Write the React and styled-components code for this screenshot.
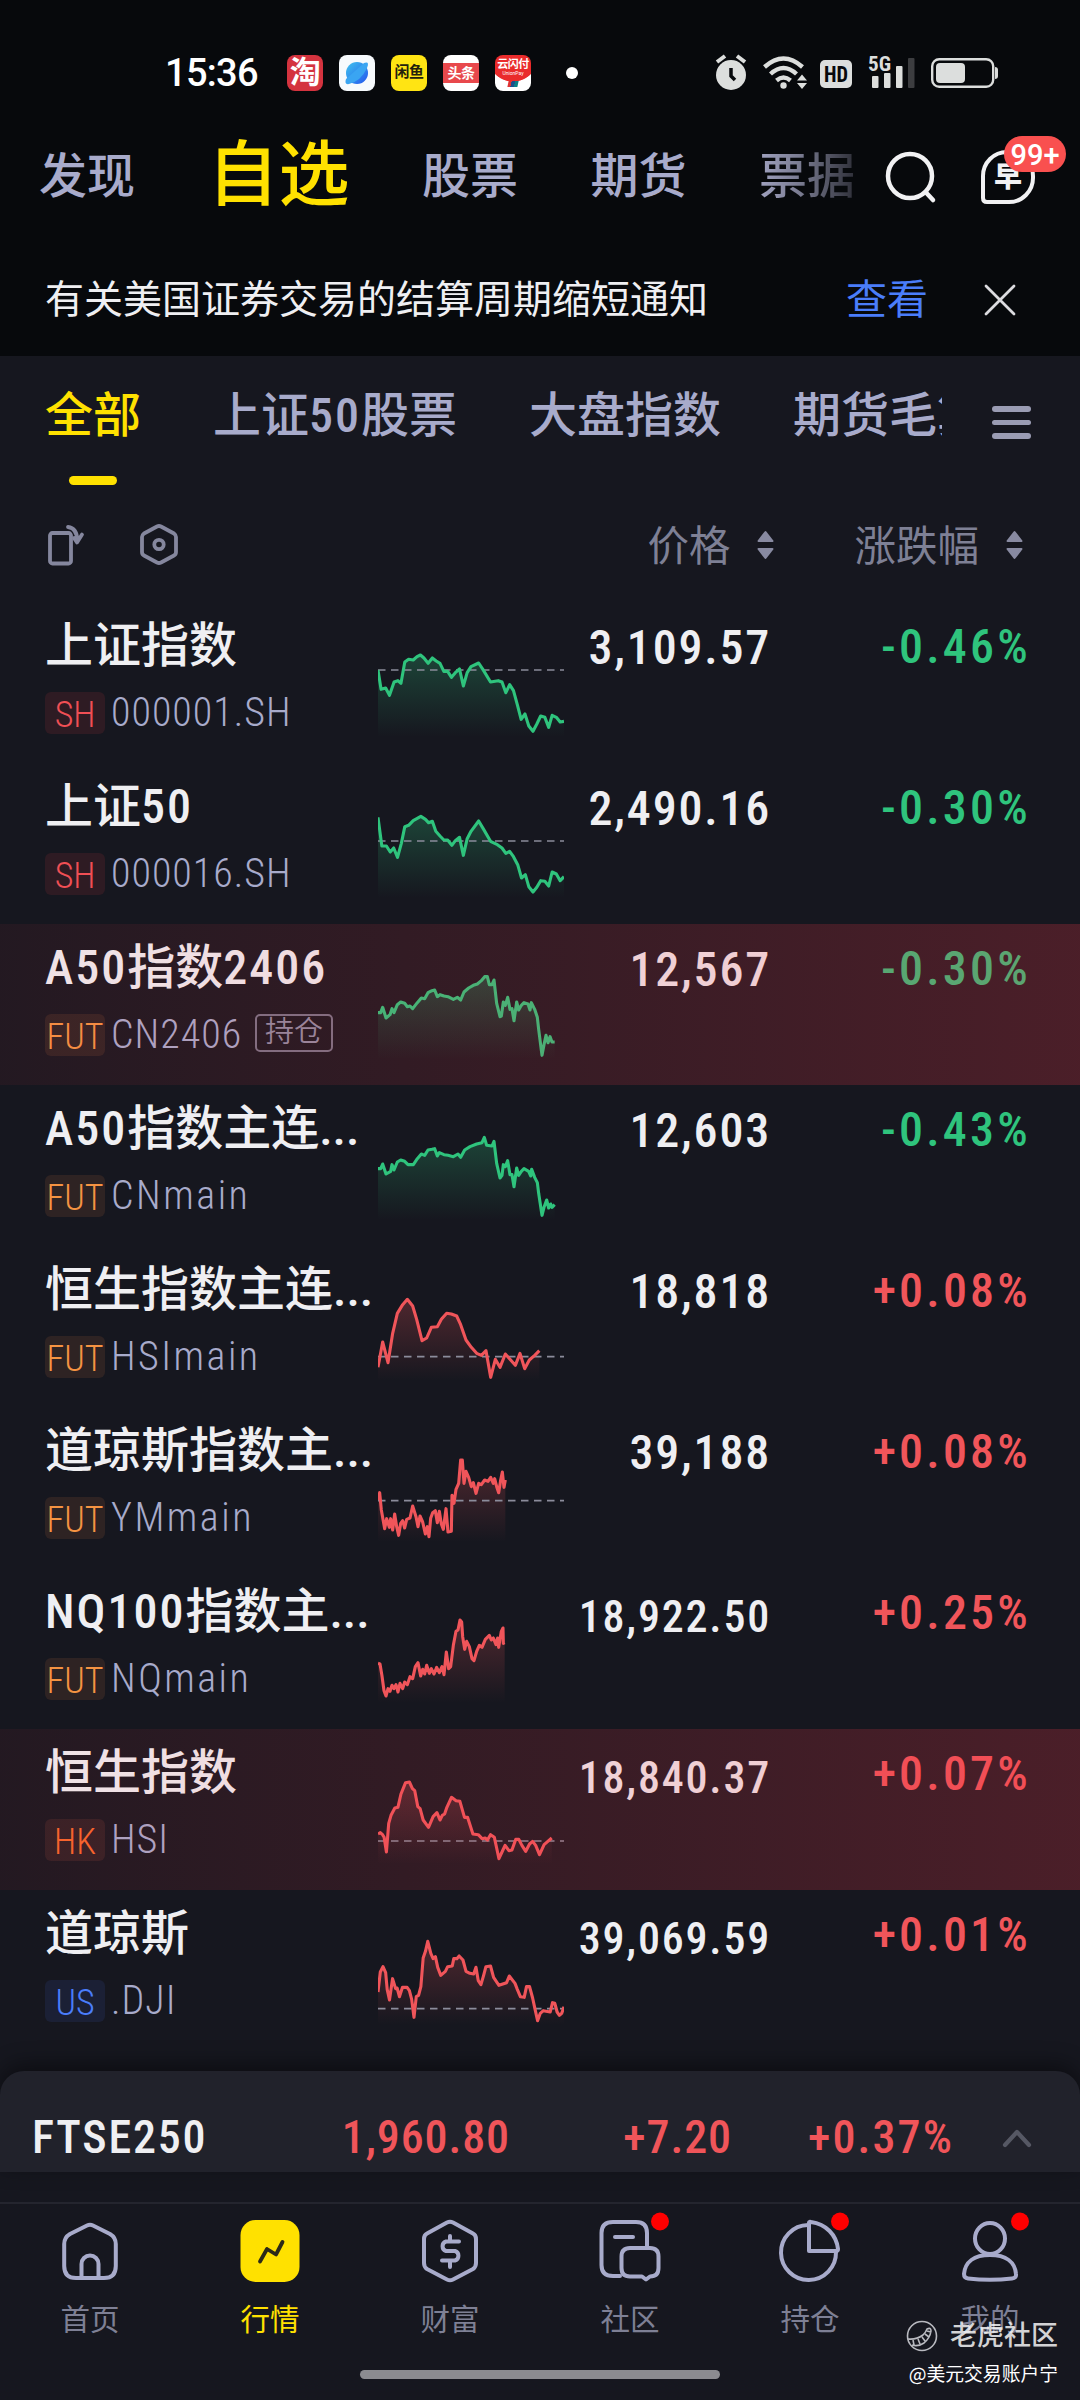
import React from "react";
import styled, { createGlobalStyle, css } from "styled-components";

const colors = {
  top: "#07090c",
  page: "#16171f",
  panel: "#21222b",
  white: "#efeff2",
  tab: "#a8abcb",
  muted: "#7e8095",
  yellow: "#ffe100",
  blue: "#4a7dfa",
  green: "#2fc47d",
  red: "#f0555a",
};

const narrow = `"Roboto Condensed", Roboto, "Noto Sans CJK SC", sans-serif`;

const GlobalStyle = createGlobalStyle`
  * {
    box-sizing: border-box;
  }
  body {
    margin: 0;
    background: ${colors.page};
    font-family: Roboto, "Noto Sans CJK SC", sans-serif;
  }
  svg {
    display: block;
    flex: none;
  }
`;

const Screen = styled.main`
  width: 1080px;
  height: 2400px;
  display: flex;
  flex-direction: column;
  overflow: hidden;
  background: ${colors.page};
  white-space: nowrap;
`;

/* status bar */

const StatusBar = styled.header`
  height: 128px;
  padding: 17px 82px 0 165px;
  display: flex;
  align-items: center;
  background: ${colors.top};
`;

const Clock = styled.time`
  width: 122px;
  font-size: 38px;
  font-weight: 500;
  line-height: 40px;
  letter-spacing: -0.7px;
  color: #fff;
`;

const AppIcons = styled.div`
  display: flex;
  gap: 16px;
`;

const AppIcon = styled.span`
  width: 36px;
  height: 36px;
  border-radius: 8px;
  display: flex;
  flex-direction: column;
  align-items: center;
  justify-content: center;
  overflow: hidden;
  background: ${({ $bg }) => $bg};
  color: ${({ $color }) => $color || "#fff"};
  font-size: ${({ $size }) => $size || 14}px;
  font-weight: 700;
  line-height: 1;
  letter-spacing: -0.5px;

  small {
    font-size: 5px;
    line-height: 6px;
    font-weight: 400;
    letter-spacing: 0;
  }
  i {
    width: 10px;
    height: 6px;
    margin-top: 5px;
    transform: skewX(-12deg);
    background: linear-gradient(90deg, #d33 30%, #1d4f8c 30% 65%, #0b7f86 65%);
  }
`;

const Dot = styled.span`
  width: 12px;
  height: 12px;
  margin: 0 auto 0 35px;
  border-radius: 50%;
  background: #fff;
`;

/* main tabs */

const TopNav = styled.nav`
  height: 98px;
  padding-left: 39px;
  display: flex;
  align-items: center;
  background: ${colors.top};
`;

const TopTabs = styled.div`
  width: 818px;
  height: 98px;
  display: flex;
  align-items: center;
  gap: 72.5px;
  overflow: hidden;
`;

const TopTab = styled.a`
  font-size: ${({ $active }) => ($active ? 71 : 48)}px;
  line-height: 90px;
  font-weight: 500;
  color: ${({ $active }) => ($active ? colors.yellow : colors.tab)};
  ${({ $active }) =>
    $active &&
    css`
      padding-bottom: 5px;
    `}
  ${({ $faded }) =>
    $faded &&
    css`
      color: transparent;
      background: linear-gradient(90deg, #a0a2c0 0%, #77798e 45%, #2e2f38 100%);
      background-clip: text;
    `}
`;

const Inbox = styled.div`
  position: relative;
  margin-left: 43px;
`;

const SearchIcon = styled.svg`
  margin-left: 27px;
`;

const Badge = styled.span`
  position: absolute;
  left: 23px;
  top: -14px;
  width: 62px;
  height: 36px;
  border-radius: 18px;
  background: #f9504f;
  color: #fff;
  font-size: 29px;
  font-weight: 500;
  line-height: 38px;
  text-align: center;
`;

/* notice */

const Notice = styled.section`
  height: 130px;
  padding: 18px 64px 0 45px;
  display: flex;
  align-items: center;
  background: ${colors.top};
  color: ${colors.white};
  font-size: 39px;
  line-height: 50px;

  a {
    margin: 0 56px 0 auto;
    font-size: 41px;
    color: ${colors.blue};
  }
`;

/* group tabs */

const GroupNav = styled.nav`
  height: 134px;
  padding: 0 49px 0 45px;
  display: flex;
  justify-content: space-between;
`;

const GroupTabs = styled.div`
  width: 897px;
  display: flex;
  gap: 72px;
  overflow: hidden;
`;

const GroupTab = styled.a`
  flex: none;
  display: flex;
  flex-direction: column;
  align-items: center;
  padding-top: 25px;
  font-size: 48px;
  line-height: 70px;
  font-weight: 500;
  color: ${({ $active }) => ($active ? colors.yellow : colors.tab)};

  &::after {
    content: "";
    width: 48px;
    height: 9px;
    margin-top: 25px;
    border-radius: 5px;
    background: ${({ $active }) => ($active ? colors.yellow : "transparent")};
  }
`;

const Latin = styled.span`
  font-family: ${narrow};
  letter-spacing: ${({ $tight }) => ($tight ? 0 : 2)}px;
`;

const MenuLines = styled.div`
  width: 39px;
  padding-top: 50px;
  display: flex;
  flex-direction: column;
  gap: 8px;

  span {
    height: 5.5px;
    border-radius: 3px;
    background: #9a9cb3;
  }
`;

/* list header */

const ListHead = styled.div`
  height: 112px;
  padding: 0 57px 2px 46px;
  display: flex;
  align-items: center;
  color: ${colors.muted};
`;

const Sort = styled.span`
  display: flex;
  align-items: center;
  gap: 27px;
  margin-left: ${({ $left }) => $left};
  font-size: 41.5px;
  line-height: 50px;

  span {
    padding-top: 3px;
  }
`;

/* rows */

const List = styled.ul`
  height: 1469px;
  margin: 0;
  padding: 0;
  list-style: none;
`;

const Row = styled.li`
  position: relative;
  height: 161px;
  padding: 0 49px 0 45px;
  display: grid;
  grid-template-columns: 333px 186px 207px 1fr;

  ${({ $flash }) =>
    $flash &&
    css`
      &::after {
        content: "";
        position: absolute;
        inset: 0;
        background: linear-gradient(
          90deg,
          rgba(246, 55, 71, 0.06),
          rgba(246, 55, 71, 0.235)
        );
      }
    `}
`;

const Name = styled.div`
  padding-top: 9px;

  h2 {
    margin: 0;
    font-size: 48px;
    line-height: 70px;
    font-weight: 500;
    color: ${colors.white};
  }
`;

const Meta = styled.p`
  margin: 10px 0 0;
  display: flex;
  align-items: center;
  font-family: ${narrow};
  font-size: 40px;
  font-weight: 350;
  line-height: 42px;
  color: ${colors.tab};
`;

const marketColors = {
  SH: ["#f04f55", "#2e1b23"],
  FUT: ["#f59342", "#2e2323"],
  HK: ["#f7672b", "#2e2024"],
  US: ["#4a7dfa", "#1b2035"],
};

const Market = styled.b`
  width: 60px;
  height: 42px;
  margin-right: 6px;
  border-radius: 6px;
  font-size: 36px;
  font-weight: 350;
  line-height: 46px;
  text-align: center;
  color: ${({ $market }) => marketColors[$market][0]};
  background: ${({ $market }) => marketColors[$market][1]};
`;

const Code = styled.span`
  padding-top: 1px;
  letter-spacing: ${({ $loose }) => ($loose ? 2.5 : 1)}px;
`;

const Held = styled.em`
  margin: -4px 0 0 13px;
  height: 38px;
  padding: 0 8px;
  border: 2px solid #767386;
  border-radius: 5px;
  font-size: 29px;
  font-style: normal;
  line-height: 33px;
  color: #8f8da3;
`;

const Price = styled.span`
  padding-top: 11px;
  text-align: right;
  font-family: ${narrow};
  font-size: ${({ $small }) => ($small ? 44 : 48)}px;
  line-height: ${({ $small }) => ($small ? 77 : 70)}px;
  font-weight: 500;
  letter-spacing: 1.8px;
  color: ${colors.white};
`;

const Change = styled(Price)`
  padding-top: 10px;
  letter-spacing: 3.2px;
  color: ${({ $up }) => ($up ? colors.red : colors.green)};
`;

/* index drawer */

const Drawer = styled.section`
  height: 101px;
  padding: 33px 48px 0 32px;
  display: grid;
  grid-template-columns: 220px 258px 222px 222px 1fr;
  border-radius: 24px 24px 0 0;
  background: ${colors.panel};
  box-shadow: 0 -6px 22px rgba(0, 0, 0, 0.45);
  font-family: ${narrow};
  font-size: 46px;
  line-height: 66px;
  font-weight: 500;
  letter-spacing: 0.9px;
  color: ${colors.red};
  text-align: right;

  strong {
    color: ${colors.white};
    font-weight: 500;
    text-align: left;
    letter-spacing: 1.8px;
  }
  em {
    font-style: normal;
    letter-spacing: 2.1px;
  }
  svg {
    margin: 23px 0 0 auto;
  }
`;

/* bottom nav */

const BottomNav = styled.nav`
  position: relative;
  height: 198px;
  margin-top: 30px;
  border-top: 2px solid #24252e;
  display: grid;
  grid-template-columns: repeat(6, 180px);
`;

const NavItem = styled.a`
  display: flex;
  flex-direction: column;
  align-items: center;
  padding-top: 8px;
  font-size: 29.5px;
  line-height: 40px;
  color: ${({ $active }) => ($active ? colors.yellow : colors.muted)};

  svg {
    margin-bottom: 14px;
  }
`;

const HomeBar = styled.span`
  position: absolute;
  left: 360px;
  top: 166px;
  width: 360px;
  height: 9px;
  border-radius: 5px;
  background: #8b8b90;
`;

const Watermark = styled.div`
  position: absolute;
  right: 22px;
  top: 113px;
  display: flex;
  flex-direction: column;
  align-items: flex-end;
  color: rgba(255, 255, 255, 0.82);
  font-size: 27px;
  font-weight: 500;
  line-height: 38px;

  div {
    display: flex;
    align-items: center;
    gap: 12px;
  }
  span {
    color: #fff;
    font-family: "Noto Sans CJK SC", sans-serif;
    font-size: 18.8px;
    font-weight: 400;
    line-height: 35px;
  }
`;

/* Every series is stored in the units of its own view box, origin at x, y. */
const rows = [
  {
    name: "上证指数", market: "SH", code: "000001.SH", price: "3,109.57", change: "-0.46%",
    box: [988, 36, 486], base: 240,
    points: "988,240 996,298 1008,294 1018,316 1030,276 1040,272 1048,280 1058,216 1068,208 1080,210 1090,200 1099,195 1108,204 1119,220 1130,204 1140,213 1150,220 1160,244 1170,244 1180,262 1190,248 1201,237 1211,288 1221,248 1231,230 1251,219 1262,238 1282,276 1302,272 1312,276 1322,308 1332,284 1342,302 1352,344 1362,388 1372,372 1382,408 1393,424 1403,402 1413,378 1424,382 1434,412 1443,376 1454,382 1464,396 1474,394",
  },
  {
    name: "上证50", market: "SH", code: "000016.SH", price: "2,490.16", change: "-0.30%",
    box: [988, 519, 486], base: 753,
    points: "988,682 998,768 1010,768 1020,786 1029,774 1039,802 1049,760 1058,710 1068,706 1080,692 1100,679 1112,688 1120,698 1130,694 1139,724 1150,738 1160,750 1170,750 1181,766 1190,752 1201,742 1211,796 1221,746 1231,724 1251,693 1264,718 1282,754 1300,764 1312,774 1322,790 1332,784 1342,800 1353,824 1363,864 1373,854 1382,890 1393,906 1403,892 1413,872 1424,874 1434,888 1443,846 1454,852 1464,872 1474,860",
  },
  {
    name: "A50指数2406", market: "FUT", code: "CN2406", price: "12,567", change: "-0.30%", held: true, flash: true,
    box: [54, 42, 558],
    points: "54,308 62,308 68,292 78,324 90,314 96,296 102,308 112,284 122,276 134,280 142,290 150,288 158,296 172,278 184,264 194,266 204,248 216,242 224,240 232,260 240,254 252,258 264,260 280,268 292,262 302,270 312,246 326,234 340,226 352,222 364,212 374,200 382,200 388,224 396,224 402,210 410,280 420,320 424,318 430,276 436,286 443,262 450,298 456,296 462,332 470,276 476,300 484,286 492,278 504,282 510,300 514,278 524,298 532,322 536,358 546,436 552,404 558,376 564,398 570,380 576,396 584,396",
  },
  {
    name: "A50指数主连...", market: "FUT", code: "CNmain", price: "12,603", change: "-0.43%",
    box: [54, 525, 558],
    points: "54,776 62,776 68,762 78,792 92,784 96,764 102,780 112,756 122,750 134,754 144,764 160,764 172,746 184,732 194,736 204,720 216,718 224,716 232,738 238,728 252,734 264,736 280,740 294,732 302,742 314,720 330,710 350,702 366,698 373,682 380,706 396,708 402,694 410,760 420,804 426,796 430,764 436,770 443,752 450,794 456,794 462,830 470,774 476,796 484,784 492,776 506,784 512,798 515,778 524,802 532,818 536,850 546,916 552,892 560,870 566,894 572,882 576,892 584,884",
  },
  {
    name: "恒生指数主连...", market: "FUT", code: "HSImain", price: "18,818", change: "+0.08%",
    box: [54, -72, 558], base: 260,
    points: "54,292 68,216 84,278 98,190 112,130 128,104 142,88 158,108 170,148 186,212 200,204 214,172 232,170 244,148 260,130 274,132 290,138 302,164 318,210 334,232 350,250 364,256 378,242 392,322 406,268 420,292 436,252 450,268 466,286 480,250 494,296 508,270 524,256 538,242",
  },
  {
    name: "道琼斯指数主...", market: "FUT", code: "YMmain", price: "39,188", change: "+0.08%",
    box: [54, 411, 558], base: 692,
    points: "54,690 59,668 64,720 74,776 80,746 88,772 92,746 98,780 104,732 110,770 116,796 122,760 128,752 134,774 140,748 150,744 158,708 168,740 174,770 180,738 188,756 196,792 202,770 207,800 212,745 218,728 226,722 232,758 238,724 244,762 250,778 258,716 264,786 274,784 276,676 282,700 288,658 296,640 302,570 307,570 312,640 318,604 326,622 334,650 340,638 348,670 356,640 364,644 374,630 384,634 392,622 400,640 404,626 410,650 416,668 422,630 427,606 432,652 436,630",
  },
  {
    name: "NQ100指数主...", market: "FUT", code: "NQmain", price: "18,922.50", change: "+0.25%",
    box: [54, 894, 558],
    points: "54,1180 60,1182 66,1218 72,1262 78,1278 84,1256 90,1264 96,1246 102,1256 108,1244 114,1266 120,1240 128,1256 134,1236 142,1244 150,1220 158,1226 166,1190 174,1178 182,1218 188,1198 194,1212 200,1186 208,1210 214,1196 222,1212 230,1192 238,1208 246,1190 252,1214 259,1146 266,1196 272,1190 280,1126 288,1084 294,1080 300,1050 305,1056 308,1100 314,1138 320,1114 328,1130 336,1166 342,1172 350,1144 358,1126 366,1132 376,1108 388,1096 394,1110 400,1104 408,1124 413,1104 416,1132 424,1084 429,1074 430,1120 434,1118",
  },
  {
    name: "恒生指数", market: "HK", code: "HSI", price: "18,840.37", change: "+0.07%", flash: true,
    box: [988, 27, 486], base: 363,
    points: "988,342 994,338 1000,344 1004,352 1010,396 1016,310 1022,286 1032,264 1040,262 1048,222 1060,188 1070,186 1078,206 1084,212 1092,260 1098,266 1106,300 1120,322 1132,290 1142,278 1150,300 1156,286 1162,282 1168,262 1180,232 1192,242 1202,244 1214,292 1222,292 1236,342 1250,344 1260,356 1268,354 1274,360 1282,344 1292,352 1298,384 1304,416 1312,396 1320,376 1330,392 1338,390 1348,358 1356,358 1364,376 1374,394 1384,372 1392,364 1400,376 1410,404 1422,374 1434,362 1442,354",
  },
  {
    name: "道琼斯", market: "US", code: ".DJI", price: "39,069.59", change: "+0.01%",
    box: [988, 510, 486], base: 866,
    points: "988,816 994,756 1001,740 1008,758 1012,808 1018,840 1026,776 1034,806 1038,804 1044,830 1052,802 1064,802 1070,812 1076,838 1082,892 1088,830 1094,826 1100,800 1106,714 1112,694 1118,664 1126,700 1132,716 1138,710 1144,742 1152,766 1164,754 1170,740 1182,738 1186,716 1194,716 1200,708 1210,720 1218,754 1228,760 1238,762 1244,742 1250,782 1257,794 1264,766 1270,740 1282,738 1290,772 1304,796 1324,788 1331,768 1346,790 1352,808 1360,830 1370,832 1376,800 1384,800 1392,834 1398,866 1405,902 1412,880 1420,872 1438,876 1444,848 1450,850 1456,876 1462,886 1468,880 1474,860",
  },
];

// latin runs inside chinese names use the narrow face
const mixed = (text) =>
  text
    .split(/([\x20-\x7e]+)/)
    .filter(Boolean)
    .map((part, i) =>
      /^[\x20-\x7e]/.test(part) ? (
        <Latin key={i} $tight={part === "..."}>{part}</Latin>
      ) : (
        part
      )
    );

function Sparkline({ id, box, base, points, up }) {
  const [x, y, w] = box;
  const color = up ? colors.red : colors.green;
  const list = points.split(" ");
  const lastX = list[list.length - 1].split(",")[0];
  const floor = y + 405;
  return (
    <svg width="186" height="161" viewBox={`${x} ${y} ${w} 483`} preserveAspectRatio="none">
      <defs>
        <linearGradient id={id} x1="0" y1="0" x2="0" y2="1">
          <stop offset="0" stopColor={color} stopOpacity="0.26" />
          <stop offset="1" stopColor={color} stopOpacity="0" />
        </linearGradient>
      </defs>
      <polygon points={`${x},${floor} ${points} ${lastX},${floor}`} fill={`url(#${id})`} />
      {base && (
        <line
          x1={x} x2={x + w} y1={base} y2={base}
          stroke="#8b8c9b" strokeWidth="1.6" strokeDasharray="7.5 5.5" vectorEffect="non-scaling-stroke"
        />
      )}
      <polyline
        points={points} fill="none" stroke={color} strokeWidth="3.1"
        strokeLinejoin="round" vectorEffect="non-scaling-stroke"
      />
    </svg>
  );
}

function StatusIcons() {
  return (
    <svg width="284" height="40" viewBox="714 52 284 40" fill="#dcdedd">
      <circle cx="731" cy="74" r="15" />
      <path d="M717 61l8-6M745 61l-8-6" stroke="#dcdedd" strokeWidth="4" />
      <path d="M731 67v8l4 4" stroke="#07090c" strokeWidth="3.5" fill="none" />
      <g fill="none" stroke="#dcdedd" strokeWidth="4.4">
        <path d="M764.500 66q19-17 38 0" />
        <path d="M770.500 73q13-12 26 0" />
        <path d="M776.500 79.500q7-6 14 0" />
      </g>
      <circle cx="783.500" cy="84.500" r="3.200" />
      <path d="M797 79.500l5-6 5 6zM797 82l5 6 5-6z" />
      <rect x="820" y="59" width="32" height="28" rx="5" />
      <text x="836" y="81" fontSize="22" fontWeight="700" textAnchor="middle" fill="#07090c" fontFamily="Roboto Condensed, Roboto" textLength="24" lengthAdjust="spacingAndGlyphs">HD</text>
      <text x="868" y="70" fontSize="20" fontWeight="700" fontFamily="Roboto Condensed, Roboto" textLength="23" lengthAdjust="spacingAndGlyphs">5G</text>
      <rect x="872" y="75" width="6.500" height="12" rx="1" />
      <rect x="884" y="72" width="6.500" height="15" rx="1" />
      <rect x="896" y="65" width="6.500" height="22" rx="1" />
      <rect x="908" y="57" width="6.500" height="30" rx="1" fill="#3c3d40" />
      <rect x="932.200" y="58.200" width="61" height="27.600" rx="7" fill="none" stroke="#dcdedd" strokeWidth="2.400" />
      <rect x="936" y="62" width="29" height="20" rx="4" />
      <path d="M995 66q3 0 3 3v6q0 3-3 3z" />
    </svg>
  );
}

const SortArrows = () => (
  <svg width="17" height="30" viewBox="0 0 17 30" fill="#888aa1" stroke="#888aa1" strokeWidth="2" strokeLinejoin="round">
    <path d="M8.500 2L15.500 11H1.500zM8.500 28L1.500 19H15.500z" />
  </svg>
);

/* 68x74 boxes, the item centre is x = 34 */
const icons = {
  home: (
    <>
      <path d="M31 13.500Q34 12 37 13.500L54 22Q59.800 25.500 59.800 32V54Q59.800 66 48 66H20Q8.200 66 8.200 54V32Q8.200 25.500 14 22Z" />
      <path d="M25.500 66V52a8.500 8.500 0 0 1 17 0V66" />
    </>
  ),
  wealth: (
    <>
      <path d="M31 10.500Q34 9 37 10.500L57 21.500Q60 23 60 27V51Q60 55 57 57L37 67.500Q34 69 31 67.500L11 57Q8 55 8 51V27Q8 23 11 21.500Z" />
      <path d="M43 29.500H30a5 5 0 0 0 0 9.500h9a5 5 0 0 1 0 9.500H26M34 24v5M34 49v6" />
    </>
  ),
  community: (
    <>
      <path d="M24 64H17Q5.500 64 5.500 53V21Q5.500 10 17 10H40Q51 10 51 21V36" />
      <path d="M19 25H37" />
      <path d="M34 36H54Q62.500 36 62.500 44.500V56Q62.500 64.500 54 64.500L50 67.500L46 64.500H34Q25.500 64.500 25.500 56V44.500Q25.500 36 34 36Z" />
    </>
  ),
  position: (
    <>
      <path d="M32 13A27.500 27.500 0 1 0 60 40" />
      <path d="M33 10.500Q33 9.500 35 10C50 12 60.500 23 62 37Q62 39 60 39H33Z" />
    </>
  ),
  mine: (
    <>
      <ellipse cx="34" cy="26.500" rx="15" ry="15.500" />
      <path d="M34 43C18 43 9 50 8 62Q8 66 12 66.500Q34 69 56 66.500Q60.500 66 60 62C59 50 50 43 34 43Z" />
    </>
  ),
};

function NavIcon({ name, dot }) {
  return (
    <svg width="84" height="74" viewBox="-8 0 84 74" fill="none" stroke="#a8abcb" strokeWidth="4" strokeLinejoin="round" strokeLinecap="round">
      {name === "market" ? (
        <>
          <rect x="4.500" y="8" width="59" height="62" rx="15" fill={colors.yellow} stroke="none" />
          <path d="M24 49.500L31 37L40 42.500L46.500 30" stroke="#2c2a18" strokeWidth="3.800" />
        </>
      ) : (
        icons[name]
      )}
      {dot && <circle cx="64" cy="9.500" r="9" fill="#ff0000" stroke="none" />}
    </svg>
  );
}

const navItems = [
  { label: "首页", icon: "home" },
  { label: "行情", icon: "market", active: true },
  { label: "财富", icon: "wealth" },
  { label: "社区", icon: "community", dot: true },
  { label: "持仓", icon: "position", dot: true },
  { label: "我的", icon: "mine", dot: true },
];

export default function App() {
  return (
    <>
      <GlobalStyle />
      <Screen>
        <StatusBar>
          <Clock>15:36</Clock>
          <AppIcons>
            <AppIcon $bg="#d4333f" $size={31}>淘</AppIcon>
            <AppIcon $bg="#f6fafd">
              <svg width="28" height="28" viewBox="0 0 28 28">
                <defs>
                  <linearGradient id="planet" x1="0" y1="0" x2="1" y2="1">
                    <stop offset="0" stopColor="#3fc3ee" />
                    <stop offset="1" stopColor="#2356ee" />
                  </linearGradient>
                </defs>
                <circle cx="14" cy="14" r="11" fill="url(#planet)" />
                <path d="M3 20Q1 26 6 25Q18 22 24 9Q27 2 21 4" fill="#3aa5f2" />
              </svg>
            </AppIcon>
            <AppIcon $bg="#ffe413" $color="#24210c" $size={15}>闲鱼</AppIcon>
            <AppIcon $bg="linear-gradient(#fff 22%, #e8484c 22% 79%, #fff 79%)" $size={14}>头条</AppIcon>
            <AppIcon $bg="radial-gradient(ellipse 26px 27px at 50% 0, #ea2b2b 97%, #fff 100%)" $size={11}>
              云闪付
              <small>UnionPay</small>
              <i />
            </AppIcon>
          </AppIcons>
          <Dot />
          <StatusIcons />
        </StatusBar>

        <TopNav>
          <TopTabs>
            <TopTab>发现</TopTab>
            <TopTab $active>自选</TopTab>
            <TopTab>股票</TopTab>
            <TopTab>期货</TopTab>
            <TopTab $faded>票据</TopTab>
          </TopTabs>
          <SearchIcon width="54" height="54" viewBox="0 0 54 54" fill="none" stroke="#f1f1f3" strokeWidth="4.500" strokeLinecap="round">
            <circle cx="26" cy="26" r="22" />
            <path d="M42 42.500L49 50" />
          </SearchIcon>
          <Inbox>
            <svg width="54" height="54" viewBox="0 0 54 54" fill="none" stroke="#f1f1f3" strokeWidth="4">
              <path d="M26 2H28A24 24 0 0 1 52 26V28A24 24 0 0 1 28 52H6Q2 52 2 48V26A24 24 0 0 1 26 2Z" />
              <text x="27" y="37" fontSize="28" fontWeight="900" textAnchor="middle" fill="#f1f1f3" stroke="none">早</text>
            </svg>
            <Badge>99+</Badge>
          </Inbox>
        </TopNav>

        <Notice>
          有关美国证券交易的结算周期缩短通知
          <a>查看</a>
          <svg width="32" height="32" viewBox="0 0 32 32" stroke="#dcdce0" strokeWidth="2.800" strokeLinecap="round">
            <path d="M2 2L30 30M30 2L2 30" />
          </svg>
        </Notice>

        <GroupNav>
          <GroupTabs>
            <GroupTab $active>全部</GroupTab>
            <GroupTab>
              <span>{mixed("上证50股票")}</span>
            </GroupTab>
            <GroupTab>大盘指数</GroupTab>
            <GroupTab>期货毛算</GroupTab>
          </GroupTabs>
          <MenuLines>
            <span />
            <span />
            <span />
          </MenuLines>
        </GroupNav>

        <ListHead>
          <svg width="134" height="46" viewBox="46 522 134 46" fill="none" stroke="#85879e" strokeWidth="3.800" strokeLinecap="round" strokeLinejoin="round">
            <rect x="50" y="533" width="21" height="30.500" rx="2.500" />
            <path d="M68 527Q77 528 77.500 541M74 538L77 542.500L82 534.500" />
            <path d="M157 526.500Q159 525.500 161 526.500L174 533.500Q176 535 176 537V552Q176 554.500 174 555.500L161 562.500Q159 563.500 157 562.500L144 555.500Q142 554.500 142 552V537Q142 535 144 533.500Z" />
            <circle cx="159" cy="544.500" r="4.700" />
          </svg>
          <Sort $left="auto">
            <span>价格</span>
            <SortArrows />
          </Sort>
          <Sort $left="80px">
            <span>涨跌幅</span>
            <SortArrows />
          </Sort>
        </ListHead>

        <List>
          {rows.map((row, i) => {
            const up = row.change.startsWith("+");
            return (
              <Row key={row.code} $flash={row.flash}>
                <Name>
                  <h2>{mixed(row.name)}</h2>
                  <Meta>
                    <Market $market={row.market}>{row.market}</Market>
                    <Code $loose={/[a-z]/.test(row.code)}>{row.code}</Code>
                    {row.held && <Held>持仓</Held>}
                  </Meta>
                </Name>
                <Sparkline id={`fill-${i}`} box={row.box} base={row.base} points={row.points} up={up} />
                <Price $small={row.price.length > 8}>{row.price}</Price>
                <Change $up={up}>{row.change}</Change>
              </Row>
            );
          })}
        </List>

        <Drawer>
          <strong>FTSE250</strong>
          <span>1,960.80</span>
          <span>+7.20</span>
          <em>+0.37%</em>
          <svg width="30" height="22" viewBox="0 0 30 22" fill="none" stroke="#565864" strokeWidth="4.200" strokeLinecap="round" strokeLinejoin="round">
            <path d="M3 18L15 5L27 18" />
          </svg>
        </Drawer>

        <BottomNav>
          {navItems.map((item) => (
            <NavItem key={item.label} $active={item.active}>
              <NavIcon name={item.icon} dot={item.dot} />
              {item.label}
            </NavItem>
          ))}
          <HomeBar />
          <Watermark>
            <div>
              <svg width="32" height="32" viewBox="0 0 32 32" fill="none" stroke="#b9bac0" strokeWidth="1.600">
                <circle cx="16" cy="16" r="14.500" />
                <path d="M2 19Q10 20 17 15Q20 12 21 9Q25 7 25 11Q24 18 18 23Q12 27 6 25M7 20l1 5M12 19l2 5M16 17l3 4M19 14l4 3M21 11l4 1" />
              </svg>
              老虎社区
            </div>
            <span>@美元交易账户宁</span>
          </Watermark>
        </BottomNav>
      </Screen>
    </>
  );
}
